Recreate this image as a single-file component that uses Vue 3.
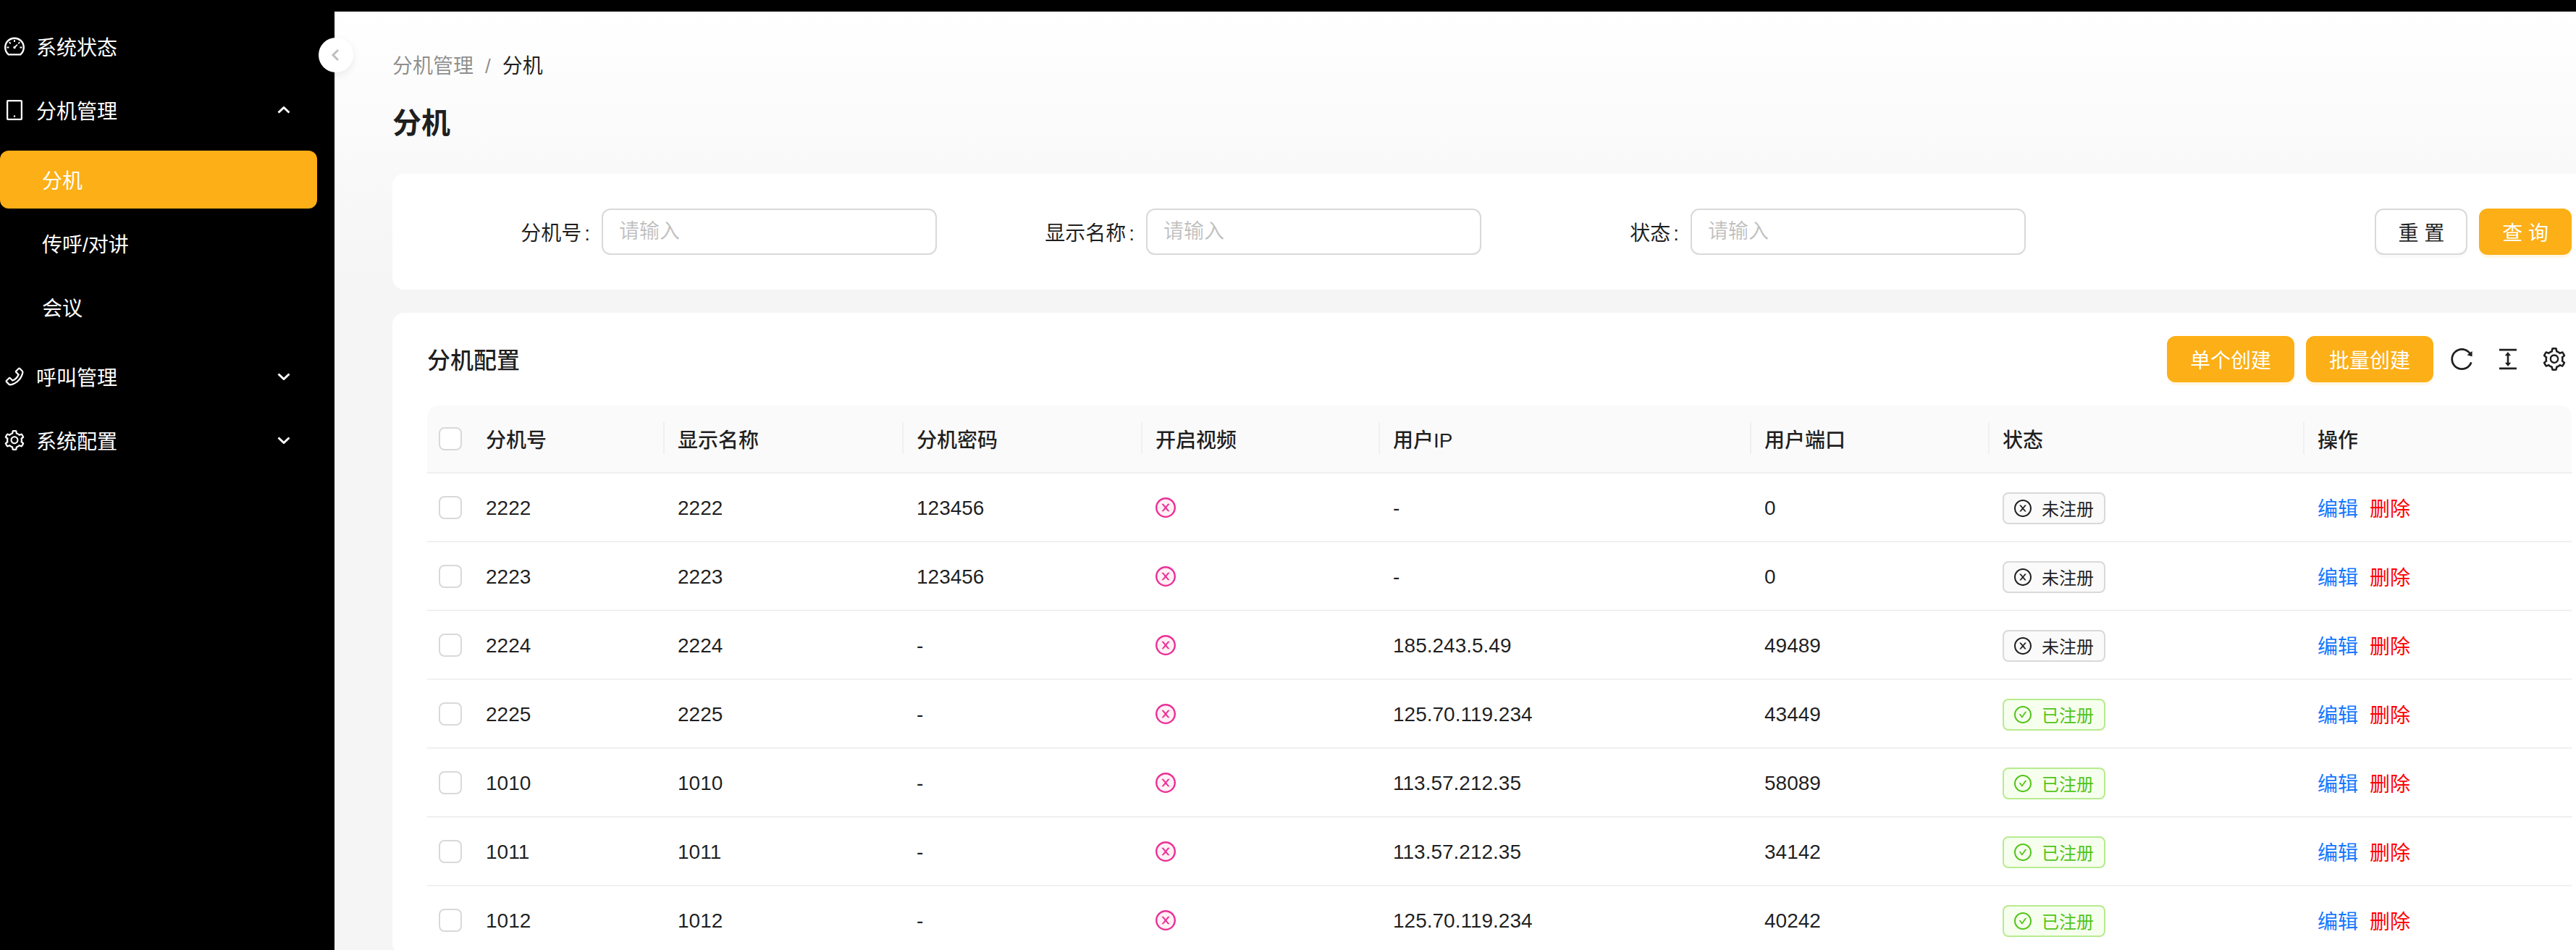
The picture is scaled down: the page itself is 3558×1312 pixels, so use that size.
<script setup>
// ant design icon paths, all drawn in the viewBox 64 64 896 896
const icons = {
  dashboard: 'M924.8 385.6a446.7 446.7 0 00-96-142.4 446.7 446.7 0 00-142.4-96C631.1 123.8 572.5 112 512 112s-119.1 11.8-174.4 35.2a446.7 446.7 0 00-142.4 96 446.7 446.7 0 00-96 142.4C75.8 440.9 64 499.5 64 560c0 132.7 58.3 257.7 159.9 343.1l1.7 1.4c5.8 4.8 13.1 7.5 20.6 7.5h531.7c7.5 0 14.8-2.7 20.6-7.5l1.7-1.4C901.7 817.7 960 692.7 960 560c0-60.5-11.9-119.1-35.2-174.4zM761.4 836H262.6A371.12 371.12 0 01140 560c0-99.4 38.7-192.8 109-263 70.3-70.3 163.7-109 263-109 99.4 0 192.8 38.7 263 109 70.3 70.3 109 163.7 109 263 0 105.6-44.5 205.5-122.6 276zM623.5 421.5a8.03 8.03 0 00-11.3 0L527.7 506c-18.7-5-39.4-.2-54.1 14.5a55.95 55.95 0 000 79.2 55.95 55.95 0 0079.2 0 55.87 55.87 0 0014.5-54.1l84.5-84.5c3.1-3.1 3.1-8.2 0-11.3l-28.3-28.3zM490 320h44c4.4 0 8-3.6 8-8v-80c0-4.4-3.6-8-8-8h-44c-4.4 0-8 3.6-8 8v80c0 4.4 3.6 8 8 8zm260 218v44c0 4.4 3.6 8 8 8h80c4.4 0 8-3.6 8-8v-44c0-4.4-3.6-8-8-8h-80c-4.4 0-8 3.6-8 8zm12.7-197.2l-31.1-31.1a8.03 8.03 0 00-11.3 0l-56.6 56.6a8.03 8.03 0 000 11.3l31.1 31.1c3.1 3.1 8.2 3.1 11.3 0l56.6-56.6c3.1-3.1 3.1-8.2 0-11.3zm-458.6-31.1a8.03 8.03 0 00-11.3 0l-31.1 31.1a8.03 8.03 0 000 11.3l56.6 56.6c3.1 3.1 8.2 3.1 11.3 0l31.1-31.1c3.1-3.1 3.1-8.2 0-11.3l-56.6-56.6zM262 530h-80c-4.4 0-8 3.6-8 8v44c0 4.4 3.6 8 8 8h80c4.4 0 8-3.6 8-8v-44c0-4.4-3.6-8-8-8z',
  tablet: 'M800 64H224c-35.3 0-64 28.7-64 64v768c0 35.3 28.7 64 64 64h576c35.3 0 64-28.7 64-64V128c0-35.3-28.7-64-64-64zm-8 824H232V136h560v752zM472 784a40 40 0 1080 0 40 40 0 10-80 0z',
  phone: 'M877.1 238.7L770.6 132.3c-13-13-30.4-20.3-48.8-20.3s-35.8 7.2-48.8 20.3L558.3 246.8c-13 13-20.3 30.5-20.3 48.9 0 18.5 7.2 35.8 20.3 48.9l89.6 89.7a405.46 405.46 0 01-86.4 127.3c-36.7 36.9-79.6 66-127.2 86.6l-89.6-89.7c-13-13-30.4-20.3-48.8-20.3a68.2 68.2 0 00-48.8 20.3L132.3 673c-13 13-20.3 30.5-20.3 48.9 0 18.5 7.2 35.8 20.3 48.9l106.4 106.4c22.2 22.2 52.8 34.9 84.2 34.9 6.5 0 12.8-.5 19.2-1.6 132.4-21.8 263.8-92.3 369.9-198.3C818 606 888.4 474.6 910.4 342.1c6.3-37.6-6.3-76.3-33.3-103.4zm-37.6 91.5c-19.5 117.9-82.9 235.5-178.4 331s-213 158.9-330.9 178.4c-14.8 2.5-30-2.5-40.8-13.2L184.9 721.9 295.7 611l119.8 120 .9.9 21.6-8a481.29 481.29 0 00285.7-285.8l8-21.6-120.8-120.7 110.8-110.9 104.5 104.5c10.8 10.8 15.8 26 13.3 40.8z',
  setting: 'M924.8 625.7l-65.5-56c3.1-19 4.7-38.4 4.7-57.8s-1.6-38.8-4.7-57.8l65.5-56a32.03 32.03 0 009.3-35.2l-.9-2.6a443.74 443.74 0 00-79.7-137.9l-1.8-2.1a32.12 32.12 0 00-35.1-9.5l-81.3 28.9c-30-24.6-63.5-44-99.7-57.6l-15.7-85a32.05 32.05 0 00-25.8-25.7l-2.7-.5c-52.1-9.4-106.9-9.4-159 0l-2.7.5a32.05 32.05 0 00-25.8 25.7l-15.8 85.4a351.86 351.86 0 00-99 57.4l-81.9-29.1a32 32 0 00-35.1 9.5l-1.8 2.1a446.02 446.02 0 00-79.7 137.9l-.9 2.6c-4.5 12.5-.8 26.5 9.3 35.2l66.3 56.6c-3.1 18.8-4.6 38-4.6 57.1 0 19.2 1.5 38.4 4.6 57.1L99 625.5a32.03 32.03 0 00-9.3 35.2l.9 2.6c18.1 50.4 44.9 96.9 79.7 137.9l1.8 2.1a32.12 32.12 0 0035.1 9.5l81.9-29.1c29.8 24.5 63.1 43.9 99 57.4l15.8 85.4a32.05 32.05 0 0025.8 25.7l2.7.5a449.4 449.4 0 00159 0l2.7-.5a32.05 32.05 0 0025.8-25.7l15.7-85a350 350 0 0099.7-57.6l81.3 28.9a32 32 0 0035.1-9.5l1.8-2.1c34.8-41.1 61.6-87.5 79.7-137.9l.9-2.6c4.5-12.3.8-26.3-9.3-35zM788.3 465.9c2.5 15.1 3.8 30.6 3.8 46.1s-1.3 31-3.8 46.1l-6.6 40.1 74.7 63.9a370.03 370.03 0 01-42.6 73.6L721 702.8l-31.4 25.8c-23.9 19.6-50.5 35-79.3 45.8l-38.1 14.3-17.9 97a377.5 377.5 0 01-85 0l-17.9-97.2-37.8-14.5c-28.5-10.8-55-26.2-78.7-45.7l-31.4-25.9-93.4 33.2c-17-22.9-31.2-47.6-42.6-73.6l75.5-64.5-6.5-40c-2.4-14.9-3.7-30.3-3.7-45.5 0-15.3 1.2-30.6 3.7-45.5l6.5-40-75.5-64.5c11.3-26.1 25.6-50.7 42.6-73.6l93.4 33.2 31.4-25.9c23.7-19.5 50.2-34.9 78.7-45.7l37.9-14.3 17.9-97.2c28.1-3.2 56.8-3.2 85 0l17.9 97 38.1 14.3c28.7 10.8 55.4 26.2 79.3 45.8l31.4 25.8 92.8-32.9c17 22.9 31.2 47.6 42.6 73.6L781.8 426l6.5 39.9zM512 326c-97.2 0-176 78.8-176 176s78.8 176 176 176 176-78.8 176-176-78.8-176-176-176zm79.2 255.2A111.6 111.6 0 01512 614c-29.9 0-58-11.7-79.2-32.8A111.6 111.6 0 01400 502c0-29.9 11.7-58 32.8-79.2C454 401.6 482.1 390 512 390c29.9 0 58 11.6 79.2 32.8A111.6 111.6 0 01624 502c0 29.9-11.7 58-32.8 79.2z',
  reload: 'M909.1 209.3l-56.4 44.1C775.8 155.1 656.2 92 521.9 92 290 92 102.3 279.5 102 511.5 101.7 743.7 289.8 932 521.9 932c181.3 0 335.8-115 394.6-276.1 1.5-4.2-.7-8.9-4.9-10.3l-56.7-19.5a8 8 0 00-10.1 4.8c-1.8 5-3.8 10-5.9 14.9-17.3 41-42.1 77.8-73.7 109.4A344.77 344.77 0 01655.9 829c-42.3 17.9-87.4 27-133.8 27-46.5 0-91.5-9.1-133.8-27A341.5 341.5 0 01279 755.2a342.16 342.16 0 01-73.7-109.4c-17.9-42.4-27-87.4-27-133.9s9.1-91.5 27-133.9c17.3-41 42.1-77.8 73.7-109.4 31.6-31.6 68.4-56.4 109.3-73.8 42.3-17.9 87.4-27 133.8-27 46.5 0 91.5 9.1 133.8 27a341.5 341.5 0 01109.3 73.8c9.9 9.9 19.2 20.4 27.8 31.4l-60.2 47a8 8 0 003 14.1l175.6 43c5 1.2 9.9-2.6 9.9-7.7l.8-180.9c-.1-6.6-7.8-10.3-13-6.2z',
  height: 'M840 836H184c-4.4 0-8 3.6-8 8v60c0 4.4 3.6 8 8 8h656c4.4 0 8-3.6 8-8v-60c0-4.4-3.6-8-8-8zm0-724H184c-4.4 0-8 3.6-8 8v60c0 4.4 3.6 8 8 8h656c4.4 0 8-3.6 8-8v-60c0-4.4-3.6-8-8-8zM610.8 378c6 0 9.4-7 5.7-11.7L515.7 238.7a7.14 7.14 0 00-11.3 0L403.6 366.3a7.23 7.23 0 005.7 11.7H476v268h-62.8c-6 0-9.4 7-5.7 11.7l100.8 127.5c2.9 3.7 8.5 3.7 11.3 0l100.8-127.5c3.7-4.7.4-11.7-5.7-11.7H548V378h62.8z',
  closeCircle: 'M685.4 354.8c0-4.4-3.6-8-8-8l-66 .3L512 465.6l-99.3-118.4-66.1-.3c-4.4 0-8 3.5-8 8 0 1.9.7 3.7 1.9 5.2l130.1 155L340.5 670a8.32 8.32 0 00-1.9 5.2c0 4.4 3.6 8 8 8l66.1-.3L512 564.4l99.3 118.4 66 .3c4.4 0 8-3.5 8-8 0-1.9-.7-3.7-1.9-5.2L553.5 515l130.1-155c1.2-1.4 1.8-3.3 1.8-5.2zM512 65C264.6 65 64 265.6 64 513s200.6 448 448 448 448-200.6 448-448S759.4 65 512 65zm0 820c-205.4 0-372-166.6-372-372s166.6-372 372-372 372 166.6 372 372-166.6 372-372 372z',
  checkCircle: 'M699 353h-46.9c-10.2 0-19.9 4.9-25.9 13.3L469 584.3l-71.2-98.8c-6-8.3-15.6-13.3-25.9-13.3H325c-6.5 0-10.3 7.4-6.5 12.7l124.6 172.8a31.8 31.8 0 0051.7 0l210.6-292c3.9-5.3.1-12.7-6.4-12.7zM512 64C264.6 64 64 264.6 64 512s200.6 448 448 448 448-200.6 448-448S759.4 64 512 64zm0 820c-205.4 0-372-166.6-372-372s166.6-372 372-372 372 166.6 372 372-166.6 372-372 372z',
}

const filters = [
  { label: '分机号' },
  { label: '显示名称' },
  { label: '状态' },
]

const columns = ['分机号', '显示名称', '分机密码', '开启视频', '用户IP', '用户端口', '状态', '操作']

const rows = [
  { no: '2222', name: '2222', pwd: '123456', ip: '-', port: '0', online: false },
  { no: '2223', name: '2223', pwd: '123456', ip: '-', port: '0', online: false },
  { no: '2224', name: '2224', pwd: '-', ip: '185.243.5.49', port: '49489', online: false },
  { no: '2225', name: '2225', pwd: '-', ip: '125.70.119.234', port: '43449', online: true },
  { no: '1010', name: '1010', pwd: '-', ip: '113.57.212.35', port: '58089', online: true },
  { no: '1011', name: '1011', pwd: '-', ip: '113.57.212.35', port: '34142', online: true },
  { no: '1012', name: '1012', pwd: '-', ip: '125.70.119.234', port: '40242', online: true },
]
</script>

<template>
  <div class="layout">
    <aside class="sider">
      <div class="menu-item">
        <svg class="menu-icon" viewBox="64 64 896 896"><path :d="icons.dashboard" /></svg>
        <span>系统状态</span>
      </div>
      <div class="menu-item">
        <svg class="menu-icon" viewBox="64 64 896 896"><path :d="icons.tablet" /></svg>
        <span>分机管理</span>
        <svg class="arrow" viewBox="0 0 18 10"><path d="M1.5 8.5 9 1.5l7.5 7" /></svg>
      </div>
      <div class="menu-item sub active">分机</div>
      <div class="menu-item sub">传呼/对讲</div>
      <div class="menu-item sub">会议</div>
      <div class="menu-item group-start">
        <svg class="menu-icon" viewBox="64 64 896 896"><path :d="icons.phone" /></svg>
        <span>呼叫管理</span>
        <svg class="arrow" viewBox="0 0 18 10"><path d="M1.5 1.5 9 8.5l7.5-7" /></svg>
      </div>
      <div class="menu-item">
        <svg class="menu-icon" viewBox="64 64 896 896"><path :d="icons.setting" /></svg>
        <span>系统配置</span>
        <svg class="arrow" viewBox="0 0 18 10"><path d="M1.5 1.5 9 8.5l7.5-7" /></svg>
      </div>
    </aside>

    <div class="collapse">
      <svg viewBox="0 0 12 18"><path d="M10 2 3 9l7 7" /></svg>
    </div>

    <main class="main">
      <div class="crumbs">
        <span class="crumb-link">分机管理</span>
        <span class="crumb-sep">/</span>
        <span>分机</span>
      </div>
      <h1 class="page-title">分机</h1>

      <section class="card search">
        <div class="fields">
          <div v-for="f in filters" :key="f.label" class="field">
            <label class="field-label">{{ f.label }}<i>:</i></label>
            <input class="field-input" placeholder="请输入" />
          </div>
        </div>
        <div class="search-btns">
          <button class="btn">重 置</button>
          <button class="btn primary">查 询</button>
        </div>
      </section>

      <section class="card list">
        <div class="list-head">
          <div class="list-title">分机配置</div>
          <div class="tools">
            <button class="btn primary">单个创建</button>
            <button class="btn primary">批量创建</button>
            <svg class="tool first" viewBox="64 64 896 896"><path :d="icons.reload" /></svg>
            <svg class="tool" viewBox="64 64 896 896"><path :d="icons.height" /></svg>
            <svg class="tool" viewBox="64 64 896 896"><path :d="icons.setting" /></svg>
          </div>
        </div>

        <table class="table">
          <colgroup>
            <col style="width: 63px" />
            <col style="width: 265px" />
            <col style="width: 330px" />
            <col style="width: 330px" />
            <col style="width: 328px" />
            <col style="width: 513px" />
            <col style="width: 329px" />
            <col style="width: 435px" />
            <col style="width: 369px" />
          </colgroup>
          <thead>
            <tr>
              <th class="check-cell"><span class="checkbox"></span></th>
              <th v-for="c in columns" :key="c">{{ c }}</th>
            </tr>
          </thead>
          <tbody>
            <tr v-for="r in rows" :key="r.no">
              <td class="check-cell"><span class="checkbox"></span></td>
              <td>{{ r.no }}</td>
              <td>{{ r.name }}</td>
              <td>{{ r.pwd }}</td>
              <td>
                <svg class="video-off" viewBox="64 64 896 896">
                  <circle cx="512" cy="513" r="400" fill="#fff0f6" />
                  <path fill="#eb2f96" :d="icons.closeCircle" />
                </svg>
              </td>
              <td>{{ r.ip }}</td>
              <td>{{ r.port }}</td>
              <td>
                <span class="tag" :class="{ ok: r.online }">
                  <svg viewBox="64 64 896 896"><path :d="r.online ? icons.checkCircle : icons.closeCircle" /></svg>
                  {{ r.online ? '已注册' : '未注册' }}
                </span>
              </td>
              <td class="ops">
                <a class="link">编辑</a>
                <a class="link danger">删除</a>
              </td>
            </tr>
          </tbody>
        </table>
      </section>
    </main>
  </div>
</template>

<style>
html,
body {
  margin: 0;
  height: 100%;
  overflow: hidden;
  background: #000;
}
</style>

<style scoped>
.layout {
  position: relative;
  display: flex;
  height: 1312px;
  padding-top: 16px;
  box-sizing: border-box;
  background: #000;
  font-family: "Liberation Sans", "Noto Sans CJK SC", sans-serif;
  font-size: 28px;
  color: rgba(0, 0, 0, 0.88);
}

.sider {
  flex: 0 0 462px;
  display: flex;
  flex-direction: column;
  gap: 8px;
  padding-top: 8px;
  box-sizing: border-box;
  color: #fff;
}

.menu-item {
  display: flex;
  align-items: center;
  flex: 0 0 80px;
  width: 438px;
  padding: 0 37px 0 6px;
  box-sizing: border-box;
  border-radius: 12px;
}

.menu-item.sub {
  padding-left: 58px;
}

.menu-item.active {
  margin-top: 8px;
  background: #fcaf17;
}

.menu-item.group-start {
  margin-top: 8px;
}

.menu-icon {
  width: 28px;
  height: 28px;
  margin-right: 16px;
  fill: #fff;
}

.arrow {
  width: 18px;
  height: 10px;
  margin-left: auto;
  fill: none;
  stroke: #fff;
  stroke-width: 3;
}

.collapse {
  position: absolute;
  top: 52px;
  left: 440px;
  width: 48px;
  height: 48px;
  display: flex;
  align-items: center;
  justify-content: center;
  border-radius: 50%;
  background: #fff;
  box-shadow: 0 4px 12px rgba(0, 0, 0, 0.08);
}

.collapse svg {
  width: 12px;
  height: 18px;
  margin-right: 2px;
  fill: none;
  stroke: #bfbfbf;
  stroke-width: 3;
}

.main {
  flex: 1;
  min-width: 0;
  overflow: hidden;
  padding: 54px 0 0 78px;
  border-left: 2px solid #f0f0f0;
  background: linear-gradient(#fff, #f5f5f5 28%);
}

.crumbs {
  display: flex;
  align-items: center;
  height: 44px;
  line-height: 44px;
}

.crumb-link {
  color: rgba(0, 0, 0, 0.45);
}

.crumb-sep {
  margin: 0 16px;
  color: rgba(0, 0, 0, 0.45);
}

.page-title {
  margin: 28px 0 42px;
  font-size: 40px;
  line-height: 56px;
  font-weight: 600;
}

.card {
  width: 3058px;
  box-sizing: border-box;
  background: #fff;
  border-radius: 16px;
}

.search {
  display: flex;
  justify-content: space-between;
  align-items: center;
  height: 160px;
  padding: 0 48px;
  margin-bottom: 32px;
}

.fields {
  display: grid;
  grid-template-columns: repeat(3, 704px);
  column-gap: 48px;
}

.field {
  display: flex;
  align-items: center;
}

.field-label {
  flex: 0 0 241px;
  padding-right: 16px;
  box-sizing: border-box;
  text-align: right;
}

.field-label i {
  margin-left: 4px;
  font-style: normal;
}

.field-input {
  flex: 1;
  min-width: 0;
  height: 64px;
  padding: 0 22px;
  box-sizing: border-box;
  border: 2px solid #d9d9d9;
  border-radius: 12px;
  outline: none;
  font: inherit;
  background: #fff;
}

.field-input::placeholder {
  color: rgba(0, 0, 0, 0.25);
}

.search-btns,
.tools {
  display: flex;
  align-items: center;
  gap: 16px;
}

.btn {
  height: 64px;
  padding: 0 30px;
  border: 2px solid #d9d9d9;
  border-radius: 12px;
  background: #fff;
  font: inherit;
  color: rgba(0, 0, 0, 0.88);
  box-shadow: 0 4px 0 rgba(0, 0, 0, 0.02);
}

.btn.primary {
  border-color: #fcaf17;
  background: #fcaf17;
  color: #fff;
  box-shadow: 0 4px 0 rgba(252, 175, 23, 0.1);
}

.list {
  padding: 32px 48px 0;
}

.list-head {
  display: flex;
  justify-content: space-between;
  align-items: center;
  margin-bottom: 32px;
}

.list-title {
  padding-bottom: 3px;
  font-size: 32px;
  font-weight: 500;
}

.tools {
  padding-right: 8px;
}

.tool {
  width: 32px;
  height: 32px;
  margin-left: 16px;
  fill: rgba(0, 0, 0, 0.88);
}

.tool.first {
  margin-left: 7px;
}

.table {
  width: 2962px;
  table-layout: fixed;
  border-collapse: separate;
  border-spacing: 0;
}

.table th,
.table td {
  box-sizing: border-box;
  padding: 0 18px;
  text-align: left;
  border-bottom: 2px solid #f0f0f0;
}

.table th {
  position: relative;
  height: 94px;
  background: #fafafa;
  font-weight: 500;
}

.table th:first-child {
  border-top-left-radius: 16px;
}

.table th:last-child {
  border-top-right-radius: 16px;
}

.table th:not(:first-child):not(:last-child)::after {
  content: "";
  position: absolute;
  top: 23px;
  right: 0;
  width: 2px;
  height: 44px;
  background: #f0f0f0;
}

.table td {
  height: 95px;
  padding-top: 2px;
}

.table td.ops {
  padding-top: 0;
}

.table .check-cell {
  padding: 0 0 0 16px;
  line-height: 0;
}

.checkbox {
  display: inline-block;
  width: 32px;
  height: 32px;
  box-sizing: border-box;
  border: 2px solid #d9d9d9;
  border-radius: 8px;
  background: #fff;
}

.video-off {
  display: block;
  width: 28px;
  height: 28px;
  margin-top: -2px;
}

.tag {
  display: inline-flex;
  align-items: center;
  gap: 14px;
  height: 44px;
  padding: 0 14px;
  box-sizing: border-box;
  border: 2px solid #d9d9d9;
  border-radius: 8px;
  background: #fafafa;
  font-size: 24px;
  vertical-align: middle;
}

.tag svg {
  width: 24px;
  height: 24px;
  fill: currentColor;
}

.tag.ok {
  border-color: #b7eb8f;
  background: #f6ffed;
  color: #52c41a;
}

.link {
  color: #1677ff;
}

.link.danger {
  margin-left: 16px;
  color: #ff0000;
}
</style>
